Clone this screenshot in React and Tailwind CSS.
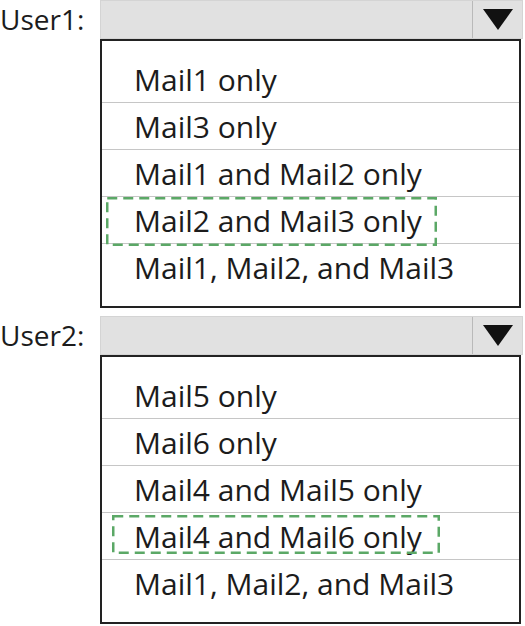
import React from 'react';

const groups = [
    {
        label: 'User1:',
        options: ['Mail1 only', 'Mail3 only', 'Mail1 and Mail2 only', 'Mail2 and Mail3 only', 'Mail1, Mail2, and Mail3'],
        picked: 3,
        mark: { left: 4, top: 0, w: 331, h: 49 },
    },
    {
        label: 'User2:',
        options: ['Mail5 only', 'Mail6 only', 'Mail4 and Mail5 only', 'Mail4 and Mail6 only', 'Mail1, Mail2, and Mail3'],
        picked: 3,
        mark: { left: 10, top: 2, w: 328, h: 39 },
    },
];

// dashed answer marker, drawn so the dashes are long like in the picture
const Mark = ({ left, top, w, h }) => (
    <svg className="absolute pointer-events-none" style={{ left, top }} width={w} height={h}>
        <rect x="1.25" y="1.25" width={w - 2.5} height={h - 2.5} fill="none" stroke="#5ba866" strokeWidth="2.5" strokeDasharray="10 6" />
    </svg>
);

const Dropdown = ({ label, options, picked, mark }) => {
    return (
        <div className="flex">
            <div className="w-[100px] shrink-0 text-[28px] leading-[38px] text-[#1c1c1c]">{label}</div>
            <div className="flex flex-col w-[423px]">
                <div className="flex h-[39px] bg-[#e1e1e1] border border-[#d4d4d4]">
                    <div className="flex-1 border-r border-[#b9b9b9]" />
                    <div className="w-[49px] flex items-center justify-center">
                        <svg width="30" height="21" viewBox="0 0 30 21">
                            <polygon points="0,0 30,0 15,21" fill="#111" />
                        </svg>
                    </div>
                </div>
                <div className="w-[421px] border-2 border-[#222] bg-white py-[15px]">
                    {options.map((opt, i) => (
                        <div
                            key={opt}
                            className={
                                'relative h-[47px] flex items-center pl-[32px] text-[30px] text-[#1c1c1c] ' +
                                (i < options.length - 1 ? 'border-b border-[#c6c6c6]' : '')
                            }
                        >
                            {opt}
                            {i === picked && <Mark {...mark} />}
                        </div>
                    ))}
                </div>
            </div>
        </div>
    );
};

export default function App() {
    return (
        <div className="w-[525px] h-[626px] bg-white overflow-hidden flex flex-col gap-[8px]" style={{ fontFamily: '"Open Sans", "Noto Sans", sans-serif' }}>
            {groups.map((g) => (
                <Dropdown key={g.label} {...g} />
            ))}
        </div>
    );
}
